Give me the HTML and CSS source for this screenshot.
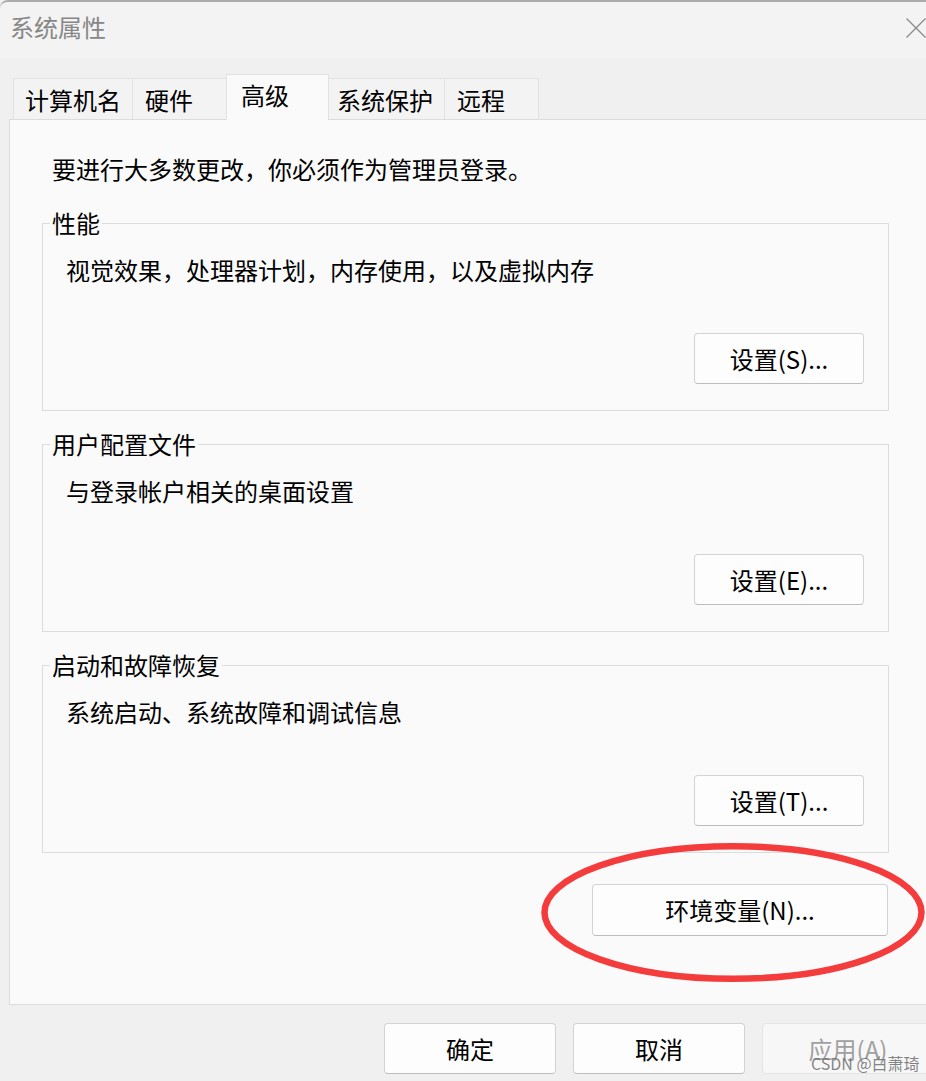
FILE: index.html
```html
<!DOCTYPE html>
<html lang="zh-CN">
<head>
<meta charset="utf-8">
<title>系统属性</title>
<link rel="stylesheet" href="styles.css">
</head>
<body>
<div class="window">
  <div class="titlebar">
    <span class="title">系统属性</span>
    <svg class="close" width="20" height="20" viewBox="0 0 20 20"><path d="M0.5 0.5 L19.5 19.5 M19.5 0.5 L0.5 19.5" stroke="#8e8e8e" stroke-width="1.4" fill="none"/></svg>
  </div>
  <div class="tabs">
    <div class="tab t1">计算机名</div>
    <div class="tab t2">硬件</div>
    <div class="tab t3 active">高级</div>
    <div class="tab t4">系统保护</div>
    <div class="tab t5">远程</div>
  </div>
  <div class="panel">
    <p class="intro">要进行大多数更改，你必须作为管理员登录。</p>
    <fieldset class="group">
      <legend>性能</legend>
      <div class="group-body">
        <p class="desc">视觉效果，处理器计划，内存使用，以及虚拟内存</p>
        <div class="btn-row"><button class="btn">设置(S)...</button></div>
      </div>
    </fieldset>
    <fieldset class="group">
      <legend>用户配置文件</legend>
      <div class="group-body">
        <p class="desc">与登录帐户相关的桌面设置</p>
        <div class="btn-row"><button class="btn">设置(E)...</button></div>
      </div>
    </fieldset>
    <fieldset class="group">
      <legend>启动和故障恢复</legend>
      <div class="group-body">
        <p class="desc">系统启动、系统故障和调试信息</p>
        <div class="btn-row"><button class="btn">设置(T)...</button></div>
      </div>
    </fieldset>
    <div class="env-row"><button class="btn env">环境变量(N)...</button></div>
  </div>
  <div class="footer">
    <button class="btn fbtn">确定</button>
    <button class="btn fbtn">取消</button>
    <button class="btn fbtn disabled">应用(A)</button>
  </div>
  <svg class="mark" width="386" height="150" viewBox="0 0 386 150"><ellipse cx="193" cy="72.5" rx="188.5" ry="66.3" fill="none" stroke="#f53c3c" stroke-width="6.5"/></svg>
  <div class="watermark">CSDN @白萧琦</div>
</div>
</body>
</html>
```
FILE: styles.css
```css
* { box-sizing: border-box; }
html, body { margin: 0; padding: 0; }
body {
  width: 926px;
  height: 1081px;
  overflow: hidden;
  background: #f0f0f0;
  font-family: "Noto Sans CJK SC", "Noto Sans", sans-serif;
  color: #000;
}
.window {
  position: relative;
  width: 926px;
  height: 1081px;
  overflow: hidden;
  background: #f0f0f0;
  display: flex;
  flex-direction: column;
}
.titlebar {
  flex: none;
  height: 58px;
  background: #f3f3f3;
  border-top: 2px solid #ababab;
  border-top-left-radius: 8px;
  display: flex;
  justify-content: space-between;
  align-items: flex-start;
  padding: 9px 0 0 10px;
}
.title {
  font-size: 24px;
  line-height: 32px;
  color: #878787;
}
.close {
  margin-top: 7px;
  flex: none;
}
.tabs {
  flex: none;
  height: 62px;
  margin-bottom: -1px;
  padding: 16px 0 0 13px;
  display: flex;
  align-items: flex-end;
}
.tab {
  height: 41px;
  margin-bottom: 1px;
  border-top: 1px solid #e2e2e2;
  border-left: 1px solid #e2e2e2;
  background: #f3f3f3;
  font-size: 24px;
  line-height: 32px;
  padding-top: 5px;
  white-space: nowrap;
}
.t1 { width: 119px; padding-left: 11px; }
.t2 { width: 94px; padding-left: 12px; }
.t3 { width: 103px; padding-left: 14px; }
.t4 { width: 115px; padding-left: 8px; border-left: none; }
.t5 { width: 95px; padding-left: 12px; border-right: 1px solid #e2e2e2; }
.tab.active {
  position: relative;
  z-index: 1;
  height: 46px;
  margin-bottom: 0;
  padding-top: 4px;
  background: #fafafa;
  border-right: 1px solid #e2e2e2;
}
.panel {
  flex: none;
  margin-left: 9px;
  width: 940px;
  height: 886px;
  border: 1px solid #dcdcdc;
  background: #fafafa;
  padding: 33px 0 0 32px;
}
.intro {
  margin: 0 0 24px 10px;
  font-size: 24px;
  line-height: 32px;
}
.group {
  margin: 0 0 19px;
  padding: 0;
  width: 847px;
  min-width: 0;
  border: 1px solid #dcdcdc;
}
.group legend {
  margin-left: 7px;
  padding: 0 2px;
  font-size: 24px;
  line-height: 28px;
}
.group-body {
  padding: 17px 24px 26px 23px;
}
.desc {
  margin: 0;
  font-size: 24px;
  line-height: 32px;
}
.btn-row {
  margin-top: 47px;
  display: flex;
  justify-content: flex-end;
}
.btn {
  font-family: inherit;
  font-size: 24px;
  line-height: 32px;
  width: 170px;
  height: 51px;
  padding: 0;
  color: #000;
  background: #fdfdfd;
  border: 1px solid #d3d3d3;
  border-bottom-color: #bdbdbd;
  border-radius: 4px;
}
.env-row {
  margin-top: 31px;
  width: 847px;
  padding-right: 1px;
  display: flex;
  justify-content: flex-end;
}
.btn.env {
  width: 296px;
  height: 52px;
}
.footer {
  flex: none;
  display: flex;
  gap: 17px;
  padding: 18px 0 0 384px;
}
.fbtn {
  flex: none;
  width: 172px;
  height: 51px;
}
.fbtn.disabled {
  color: #a0a0a0;
  background: #f7f7f7;
  border-color: #e5e5e5;
}
.mark {
  position: absolute;
  left: 540px;
  top: 840px;
}
.watermark {
  position: absolute;
  left: 811px;
  top: 1053px;
  font-size: 16px;
  line-height: 20px;
  color: rgba(110, 110, 110, 0.85);
  white-space: nowrap;
}
```
